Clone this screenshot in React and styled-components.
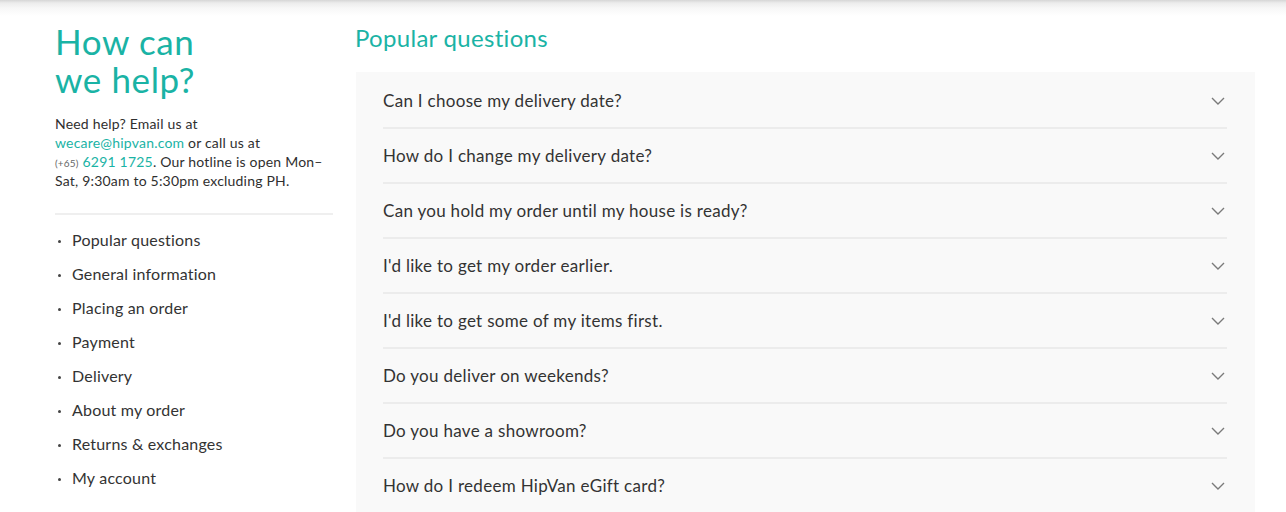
import styled, { createGlobalStyle } from "styled-components";

const GlobalStyle = createGlobalStyle`
  body {
    margin: 0;
    background: #fff;
    font-family: Lato, "Liberation Sans", sans-serif;
    color: #333;
  }
`;

const sections = [
  "Popular questions",
  "General information",
  "Placing an order",
  "Payment",
  "Delivery",
  "About my order",
  "Returns & exchanges",
  "My account",
];

const questions = [
  "Can I choose my delivery date?",
  "How do I change my delivery date?",
  "Can you hold my order until my house is ready?",
  "I'd like to get my order earlier.",
  "I'd like to get some of my items first.",
  "Do you deliver on weekends?",
  "Do you have a showroom?",
  "How do I redeem HipVan eGift card?",
];

function Chevron() {
  return (
    <svg width="14" height="8" viewBox="0 0 14 8" fill="none">
      <path d="M1 1l6 6 6-6" stroke="#7a7a7a" strokeWidth="1.4" />
    </svg>
  );
}

export default function App() {
  return (
    <>
      <GlobalStyle />
      <TopShadow />
      <Page>
        <Sidebar>
          <Title>
            How can
            <br />
            we help?
          </Title>
          <Intro>
            Need help? Email us at <br />
            <Link>wecare@hipvan.com</Link> or call us at <br />
            <Prefix>(+65)</Prefix> <Link>6291 1725</Link>. Our hotline is open Mon–
            <br />
            Sat, 9:30am to 5:30pm excluding PH.
          </Intro>
          <Divider />
          <NavList>
            {sections.map((s) => (
              <NavItem key={s}>{s}</NavItem>
            ))}
          </NavList>
        </Sidebar>
        <Main>
          <SectionTitle>Popular questions</SectionTitle>
          <Panel>
            {questions.map((q) => (
              <Question key={q}>
                <span>{q}</span>
                <Chevron />
              </Question>
            ))}
          </Panel>
        </Main>
      </Page>
    </>
  );
}

const TopShadow = styled.div`
  height: 16px;
  margin-bottom: -16px;
  background: linear-gradient(#d6d6d6 0, #ececec 3px, #f7f7f7 8px, #fff 16px);
`;

const Page = styled.div`
  display: grid;
  grid-template-columns: 278px 900px;
  gap: 22px;
  padding-left: 55px;
  padding-top: 22px;
`;

const Sidebar = styled.aside`
  display: flex;
  flex-direction: column;
`;

const Title = styled.h1`
  margin: 0;
  font-size: 35px;
  line-height: 38px;
  font-weight: 400;
  color: #1ab3a5;
  letter-spacing: 0.6px;
`;

const Intro = styled.p`
  margin: 16px 0 0;
  font-size: 14px;
  line-height: 19px;
  letter-spacing: 0.2px;
  color: #2f2f2f;
  white-space: nowrap;
`;

const Link = styled.span`
  color: #1ab3a5;
`;

const Prefix = styled.span`
  font-size: 10px;
  line-height: 1;
  color: #666;
`;

const Divider = styled.hr`
  margin: 23px 0 0;
  border: none;
  height: 2px;
  background: #efefef;
`;

const NavList = styled.ul`
  margin: 15px 0 0;
  padding: 0;
  list-style: none;
  display: flex;
  flex-direction: column;
  gap: 14px;
`;

const NavItem = styled.li`
  position: relative;
  padding-left: 17px;
  font-size: 16px;
  line-height: 20px;
  letter-spacing: 0.2px;
  color: #333;
  &::before {
    content: "";
    position: absolute;
    left: 3px;
    top: 10px;
    width: 3px;
    height: 3px;
    border-radius: 50%;
    background: #444;
  }
`;

const Main = styled.main`
  display: flex;
  flex-direction: column;
`;

const SectionTitle = styled.h2`
  margin: 2px 0 0;
  font-size: 24px;
  line-height: 28px;
  font-weight: 400;
  letter-spacing: 0.3px;
  color: #1ab3a5;
`;

const Panel = styled.div`
  margin-top: 20px;
  margin-left: 1px;
  background: #f9f9f9;
  padding: 2px 28px 0 27px;
`;

const Question = styled.div`
  display: flex;
  align-items: center;
  justify-content: space-between;
  height: 53px;
  padding-right: 2px;
  border-bottom: 2px solid #ececec;
  font-size: 17px;
  letter-spacing: 0.3px;
  color: #333;
  &:last-child {
    border-bottom: none;
  }
`;
